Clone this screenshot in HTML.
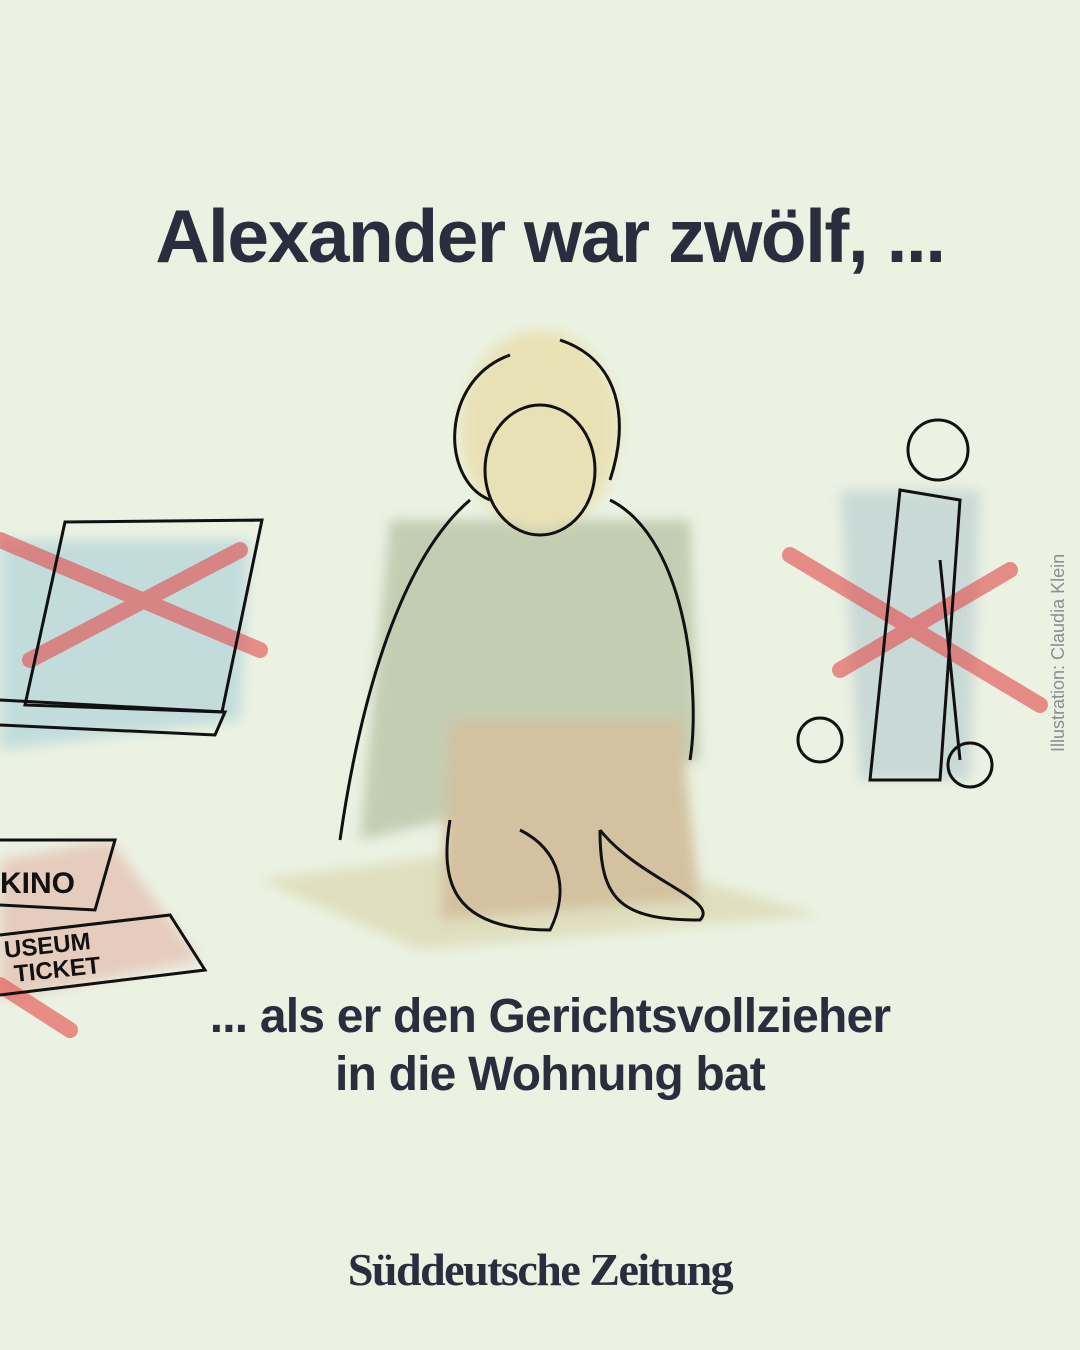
<!DOCTYPE html>
<html><head><meta charset="utf-8"><style>
html,body{margin:0;padding:0}
body{width:1080px;height:1350px;background:#ebf2e2;position:relative;overflow:hidden;font-family:"Liberation Sans",sans-serif;color:#2a2d3e}
.t{position:absolute;left:0;width:1080px;text-align:center;font-weight:bold}
#h{top:193px;font-size:75px;letter-spacing:-1.5px;padding-left:10px}
#s{top:988px;font-size:48px;line-height:58px;letter-spacing:-0.8px;padding-left:10px}
#logo{position:absolute;top:1243px;left:0;width:1080px;text-align:center;font-family:"Liberation Serif",serif;font-size:46px;font-weight:bold;letter-spacing:-1.5px}
#cr{position:absolute;left:1048px;top:752px;transform-origin:0 0;transform:rotate(-90deg);font-size:18px;color:#8a8f92;white-space:nowrap}
svg{position:absolute;left:0;top:0}
</style></head><body>
<div class="t" id="h">Alexander war zwölf, ...</div>
<svg width="1080" height="1350">
<defs><filter id="b"><feGaussianBlur stdDeviation="6"/></filter></defs>
<g filter="url(#b)" opacity="0.6">
<polygon points="260,880 560,840 820,915 420,950" fill="#d8d3a8"/>
<polygon points="390,520 690,520 700,760 360,840" fill="#a9b593"/>
<polygon points="450,720 680,720 700,900 440,920" fill="#c4a274"/>
<ellipse cx="540" cy="430" rx="80" ry="100" fill="#e8d79a"/>
<polygon points="0,540 250,540 240,720 0,750" fill="#a8cfd9"/>
<polygon points="840,490 980,490 970,780 860,780" fill="#b4c9cf"/>
<polygon points="0,860 110,840 200,960 0,1000" fill="#e2b4a6"/>
</g>
<g stroke="#e44a4a" stroke-width="16" opacity="0.6" stroke-linecap="round" fill="none">
<path d="M0,540 L260,650"/><path d="M30,660 L240,550"/>
<path d="M790,555 L1040,705"/><path d="M840,670 L1010,570"/>
<path d="M0,985 L70,1030"/>
</g>
<g stroke="#111" stroke-width="3" fill="none">
<path d="M65,522 L262,520 L222,712 L25,705 Z"/><path d="M0,700 L225,712 L215,735 L0,725"/>
<path d="M510,355 C440,380 440,480 490,500 M560,340 C620,360 630,420 610,480"/>
<ellipse cx="540" cy="470" rx="55" ry="65"/>
<path d="M470,500 C400,560 360,700 340,840 M610,500 C690,540 700,700 690,760"/>
<path d="M450,820 C440,880 450,930 550,930 C570,890 560,850 520,830 M600,830 C640,880 720,900 700,920 C620,920 600,900 600,830"/>
<circle cx="938" cy="450" r="30"/><path d="M900,490 L870,780 L940,780 L960,500 Z M940,560 L960,760"/>
<circle cx="820" cy="740" r="22"/><circle cx="970" cy="765" r="22"/>
<path d="M0,840 L115,840 L95,910 L0,905 M0,935 L170,915 L205,970 L0,995"/>
</g>
<g font-family="Liberation Sans,sans-serif" font-weight="bold" fill="#111">
<text x="0" y="893" font-size="30">KINO</text>
<text x="5" y="958" font-size="24" transform="rotate(-6 5 958)">USEUM</text>
<text x="15" y="982" font-size="24" transform="rotate(-6 15 982)">TICKET</text>
</g>
</svg>
<div class="t" id="s">... als er den Gerichtsvollzieher<br>in die Wohnung bat</div>
<div id="logo">Süddeutsche Zeitung</div>
<div id="cr">Illustration: Claudia Klein</div>
</body></html>
